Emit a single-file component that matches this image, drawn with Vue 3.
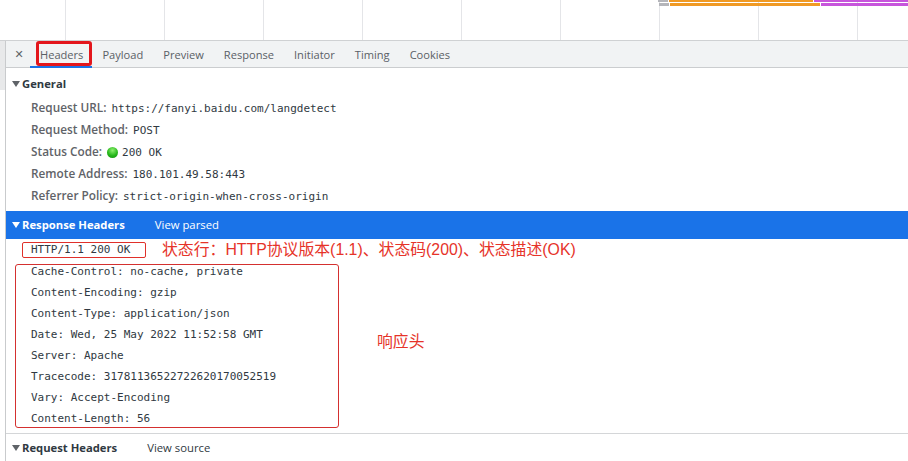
<script setup>
const gridLines = Array.from({ length: 9 })
const tabs = ['Headers', 'Payload', 'Preview', 'Response', 'Initiator', 'Timing', 'Cookies']
const general = [
  { k: 'Request URL:', v: 'https://fanyi.baidu.com/langdetect' },
  { k: 'Request Method:', v: 'POST' },
  { k: 'Status Code:', v: '200 OK', dot: true },
  { k: 'Remote Address:', v: '180.101.49.58:443' },
  { k: 'Referrer Policy:', v: 'strict-origin-when-cross-origin' }
]
const headers = [
  'Cache-Control: no-cache, private',
  'Content-Encoding: gzip',
  'Content-Type: application/json',
  'Date: Wed, 25 May 2022 11:52:58 GMT',
  'Server: Apache',
  'Tracecode: 31781136522722620170052519',
  'Vary: Accept-Encoding',
  'Content-Length: 56'
]
</script>

<template>
  <div class="page">
    <div class="timeline">
      <i v-for="(g, i) in gridLines" :key="i" class="grid-line"></i>
      <div class="bars">
        <b class="stub s1"></b>
        <b class="orange o1"></b>
        <b class="purple p1"></b>
        <b class="stub s2"></b>
        <b class="orange o2"></b>
        <b class="purple p2"></b>
      </div>
    </div>
    <div class="panel">
      <aside class="side"></aside>
      <main class="main">
        <nav class="tabs">
          <span class="close">✕</span>
          <span v-for="(t, i) in tabs" :key="t" class="tab" :class="{ active: i === 0 }">{{ t }}</span>
        </nav>
        <section class="general">
          <h3 class="title"><span class="caret"></span>General</h3>
          <div v-for="r in general" :key="r.k" class="row">
            <span class="key">{{ r.k }}</span>
            <span v-if="r.dot" class="dot"></span>
            <span class="mono">{{ r.v }}</span>
          </div>
        </section>
        <section class="response">
          <h3 class="title blue"><span class="caret"></span>Response Headers<span class="link">View parsed</span></h3>
          <div class="status-row">
            <span class="mono status">HTTP/1.1 200 OK</span>
            <span class="note">状态行：HTTP协议版本(1.1)、状态码(200)、状态描述(OK)</span>
          </div>
          <div class="head-wrap">
            <div class="head-box">
              <div v-for="h in headers" :key="h" class="mono hline">{{ h }}</div>
            </div>
            <span class="note head-note">响应头</span>
          </div>
        </section>
        <section class="request">
          <h3 class="title"><span class="caret"></span>Request Headers<span class="link">View source</span></h3>
        </section>
      </main>
    </div>
  </div>
</template>

<style>
html, body { margin: 0; background: #fff; overflow: hidden; }
</style>

<style scoped>
.page {
  width: 908px;
  height: 461px;
  overflow: hidden;
  font-family: "Open Sans", "Liberation Sans", sans-serif;
  font-size: 11.1px;
  color: #303942;
  background: #fff;
}
.timeline {
  position: relative;
  height: 40px;
  display: flex;
  padding-left: 65px;
  box-sizing: border-box;
}
.grid-line {
  flex: 0 0 99px;
  box-sizing: border-box;
  border-left: 1px solid #e4e5e8;
}
.bars {
  position: absolute;
  left: 658px;
  top: 0;
  width: 250px;
  height: 6px;
}
.bars b { position: absolute; display: block; }
.stub { background: #b4b5ba; }
.orange { background: #f09a24; }
.purple { background: #c755dc; }
.s1 { left: 0; top: 0; width: 10px; height: 2px; }
.o1 { left: 11px; top: 0; width: 144px; height: 2px; }
.p1 { left: 156px; top: 0; width: 94px; height: 2px; }
.s2 { left: 1px; top: 3px; width: 10px; height: 3px; }
.o2 { left: 12px; top: 3px; width: 150px; height: 3px; }
.p2 { left: 163px; top: 3px; width: 87px; height: 3px; }
.panel {
  display: flex;
  height: 421px;
  border-top: 1px solid #cfd1d3;
  box-sizing: border-box;
}
.side {
  flex: 0 0 6px;
  box-sizing: border-box;
  background: linear-gradient(#e8e9ea 49px, #fff 49px);
  border-right: 1px solid #c9cbcd;
}
.main { flex: 1; min-width: 0; }
.tabs {
  height: 27px;
  box-sizing: border-box;
  display: flex;
  align-items: stretch;
  background: #f1f3f4;
  border-bottom: 1px solid #cbcdcf;
  color: #5a6066;
  line-height: 27px;
}
.close {
  width: 26px;
  margin-right: 4px;
  text-align: center;
  font-size: 11px;
  color: #5f6368;
  font-family: "DejaVu Sans", sans-serif;
}
.tab { padding: 0 10px; position: relative; }
.tab.active {
  padding: 0 6px 0 1px;
  border: 3px solid #e3161c;
  border-radius: 3px;
  line-height: 21px;
  box-sizing: border-box;
  height: 25px;
  align-self: flex-start;
}
.tab.active::after {
  content: "";
  position: absolute;
  left: -9px;
  right: -3px;
  bottom: -5px;
  height: 2px;
  background: #1a73e8;
}
.general { padding: 5px 0 0; height: 143px; box-sizing: border-box; }
.general .title { margin-bottom: 2px; }
.title {
  margin: 0;
  font-size: 11.25px;
  font-weight: 700;
  height: 22px;
  line-height: 22px;
  display: flex;
  align-items: center;
  padding-left: 6px;
  color: #303942;
}
.caret {
  width: 0;
  height: 0;
  border-left: 4px solid transparent;
  border-right: 4px solid transparent;
  border-top: 6px solid #5f6368;
  margin-right: 2px;
}
.row {
  height: 22px;
  display: flex;
  align-items: center;
  padding-left: 25px;
  color: #5f6368;
}
.key { font-size: 11.8px; font-weight: 600; margin-right: 5px; margin-bottom: 2px; color: #5f6368; }
.dot {
  width: 11px;
  height: 11px;
  border-radius: 50%;
  margin-right: 4px;
  background: radial-gradient(circle at 50% 30%, #8df06f 0, #27b81c 55%, #128a0e 100%);
}
.mono {
  font-family: "DejaVu Sans Mono", "Liberation Mono", monospace;
  font-size: 11px;
  color: #303942;
}
.title.blue {
  height: 28px;
  background: #1a73e8;
  color: #fff;
}
.title.blue .caret { border-top-color: #fff; }
.link { font-size: 11.3px; font-weight: 400; margin-left: 30px; }
.status-row {
  height: 21px;
  display: flex;
  align-items: center;
  padding-left: 16px;
  position: relative;
}
.status {
  box-sizing: border-box;
  width: 124px;
  height: 16px;
  line-height: 14px;
  padding-left: 8px;
  border: 1px solid #e0302a;
  border-radius: 2px;
}
.note {
  font-family: "Liberation Sans", "Noto Sans CJK SC", sans-serif;
  font-size: 15.85px;
  color: #e63329;
}
.status-row .note { margin-left: 16px; margin-bottom: 3px; }
.head-wrap { display: flex; align-items: center; padding-left: 9px; }
.head-box {
  box-sizing: border-box;
  width: 324px;
  height: 164px;
  margin-top: 4px;
  border: 1px solid #d4302f;
  border-radius: 3px;
}
.hline {
  height: 21px;
  line-height: 21px;
  padding-left: 15px;
  position: relative;
  top: -4px;
}
.head-note { margin-left: 38px; margin-bottom: 8px; }
.request {
  margin-top: 5px;
  border-top: 1px solid #d4d6d8;
  padding-top: 3px;
}
</style>
